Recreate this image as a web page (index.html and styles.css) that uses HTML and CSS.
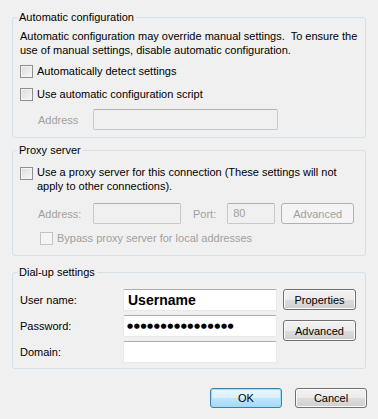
FILE: index.html
```html
<!DOCTYPE html>
<html lang="en">
<head>
  <meta charset="UTF-8" />
  <title>Dial-up Connection Settings</title>
  <link rel="stylesheet" href="styles.css">
</head>
<body>
  <div class="dialog">

    <!-- Automatic configuration -->
    <fieldset class="group group-auto">
      <legend>Automatic configuration</legend>
      <p class="desc">Automatic configuration may override manual settings.&nbsp; To ensure the<br>use of manual settings, disable automatic configuration.</p>
      <label class="check row-detect"><span class="box"></span>Automatically detect settings</label>
      <label class="check row-script"><span class="box"></span>Use automatic configuration script</label>
      <div class="field-row row-address disabled">
        <span class="label">Address</span>
        <span class="input wide"></span>
      </div>
    </fieldset>

    <!-- Proxy server -->
    <fieldset class="group group-proxy">
      <legend>Proxy server</legend>
      <label class="check multi"><span class="box"></span><span>Use a proxy server for this connection (These settings will not<br>apply to other connections).</span></label>
      <div class="proxy-row disabled">
        <span class="label">Address:</span>
        <span class="input addr"></span>
        <span class="label port-label">Port:</span>
        <span class="input port">80</span>
        <button class="btn" disabled>Advanced</button>
      </div>
      <label class="check bypass disabled"><span class="box"></span>Bypass proxy server for local addresses</label>
    </fieldset>

    <!-- Dial-up settings -->
    <fieldset class="group group-dial">
      <legend>Dial-up settings</legend>
      <div class="dial-grid">
        <div class="dial-fields">
          <div class="dial-row">
            <span class="label">User name:</span>
            <span class="input text user">Username</span>
          </div>
          <div class="dial-row">
            <span class="label">Password:</span>
            <span class="input text pass">&#9679;&#9679;&#9679;&#9679;&#9679;&#9679;&#9679;&#9679;&#9679;&#9679;&#9679;&#9679;&#9679;&#9679;&#9679;&#9679;</span>
          </div>
          <div class="dial-row">
            <span class="label">Domain:</span>
            <span class="input text"></span>
          </div>
        </div>
        <div class="dial-buttons">
          <button class="btn">Properties</button>
          <button class="btn">Advanced</button>
        </div>
      </div>
    </fieldset>

    <div class="footer">
      <button class="btn big default">OK</button>
      <button class="btn big">Cancel</button>
    </div>
  </div>
</body>
</html>
```

FILE: styles.css
```css
* {
  box-sizing: border-box;
}

body {
  margin: 0;
  background: #f0f0f0;
  color: #000;
  font-family: "Liberation Sans", Arial, sans-serif;
  font-size: 11px;
}

.dialog {
  width: 378px;
  height: 419px;
  padding: 10px 12px 0 12px;
}

.group {
  margin: 0;
  width: 354px;
  border: 1px solid #d5dfe5;
  border-radius: 3px;
  padding: 0 7px;
}

.group legend {
  padding: 0 2px;
  margin-left: -3px;
  line-height: 14px;
}

.desc {
  margin: 5px 0 0;
  line-height: 14px;
  white-space: nowrap;
}

.check {
  display: flex;
  align-items: center;
  gap: 4px;
  line-height: 14px;
  white-space: nowrap;
}

.box {
  width: 13px;
  height: 13px;
  flex: none;
  border: 1px solid #8e8f8f;
  background: linear-gradient(135deg, #dcdcdc, #f7f7f7);
  box-shadow: inset 0 0 0 1px #f4f4f4;
}

.row-detect {
  margin-top: 7px;
}

.row-script {
  margin-top: 9px;
}

.disabled,
.disabled .label {
  color: #a0a0a0;
}

.disabled .box {
  border-color: #c4c4c4;
  background: #f4f4f4;
}

.field-row {
  display: flex;
  align-items: center;
  margin-top: 8px;
  margin-left: 18px;
  padding-bottom: 7px;
}

.field-row .label {
  width: 55px;
}

.input {
  display: block;
  height: 21px;
  border: 1px solid #c8c8c8;
  border-top-color: #b0b0b0;
  background: #f0f0f0;
  border-radius: 2px;
  line-height: 19px;
  padding: 0 3px;
}

.input.wide {
  width: 185px;
}

/* proxy */
.group-proxy {
  margin-top: 5px;
}

.multi {
  align-items: flex-start;
  margin-top: 8px;
}

.multi .box {
  margin-top: 2px;
}

.proxy-row {
  display: flex;
  align-items: center;
  margin-top: 10px;
  margin-left: 18px;
}

.proxy-row .label {
  width: 55px;
}

.input.addr {
  width: 88px;
}

.proxy-row .port-label {
  width: auto;
  margin-left: 12px;
  margin-right: 11px;
}

.input.port {
  width: 48px;
  padding-left: 5px;
  color: #a0a0a0;
}

.btn {
  font-family: inherit;
  font-size: 11px;
  width: 73px;
  height: 21px;
  padding: 0;
  color: #000;
  border: 1px solid #707070;
  border-radius: 3px;
  background: linear-gradient(#f2f2f2 0%, #ebebeb 50%, #dddddd 51%, #cfcfcf 100%);
  box-shadow: inset 0 0 0 1px #fcfcfc;
}

.btn:disabled {
  color: #a0a0a0;
  border-color: #adb2b5;
  background: #f4f4f4;
  box-shadow: none;
}

.proxy-row .btn {
  margin-left: 6px;
}

.bypass {
  margin-top: 7px;
  margin-left: 20px;
  padding-bottom: 10px;
}

/* dial-up */
.group-dial {
  margin-top: 9px;
}

.dial-grid {
  display: flex;
  margin-top: 10px;
  padding-bottom: 5px;
}

.dial-fields {
  display: flex;
  flex-direction: column;
  gap: 4px;
}

.dial-row {
  display: flex;
  align-items: center;
}

.dial-row .label {
  width: 103px;
}

.input.text {
  width: 154px;
  height: 22px;
  background: #fff;
  border: 1px solid #e3e9ef;
  border-top-color: #abadb3;
}

.input.user {
  font-weight: bold;
  font-size: 14px;
  padding-left: 4px;
  line-height: 20px;
}

.input.pass {
  font-family: "DejaVu Sans", sans-serif;
  font-size: 7px;
  letter-spacing: 0.6px;
  line-height: 20px;
  padding-left: 3px;
}

.dial-buttons {
  display: flex;
  flex-direction: column;
  gap: 10px;
  margin-left: 6px;
}

.footer {
  display: flex;
  justify-content: flex-end;
  gap: 13px;
  margin-top: 19px;
  margin-right: -1px;
}

.btn.big {
  width: 72px;
  height: 20px;
}

.btn.default {
  border-color: #3c7fb1;
  background: linear-gradient(#eaf6fd 0%, #d9f0fc 50%, #bee6fd 51%, #a7d9f5 100%);
  box-shadow: inset 0 0 0 1px #9be0f9;
}
```
